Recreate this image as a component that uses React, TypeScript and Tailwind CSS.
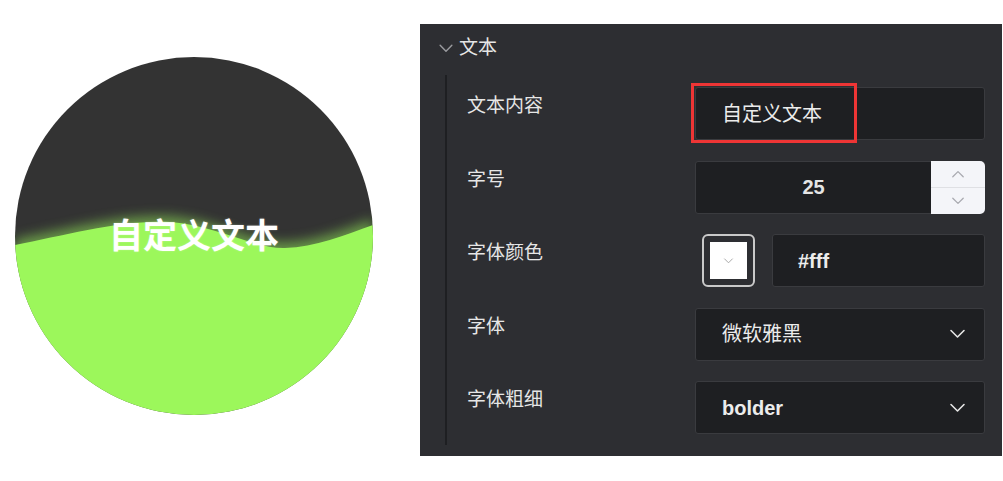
import React from "react";

const CJK = { fontFamily: '"Liberation Sans", "Noto Sans CJK SC", sans-serif' };

function Chevron({ className, up = false }: { className?: string; up?: boolean }) {
  return (
    <svg viewBox="0 0 16 10" className={className} fill="none" stroke="currentColor" strokeWidth="1.6" strokeLinecap="round" strokeLinejoin="round">
      {up ? <path d="M1.5 8.5 L8 2 L14.5 8.5" /> : <path d="M1.5 1.5 L8 8 L14.5 1.5" />}
    </svg>
  );
}

function WaveCircle() {
  const wave =
    "M0,188 C50,178 110,162 155,165 C200,168 240,192 270,191 C300,190 330,178 358,168 L358,358 L0,358 Z";
  return (
    <div className="relative w-[358px] h-[358px]">
      <svg width="358" height="358" viewBox="0 0 358 358" className="absolute inset-0">
        <defs>
          <clipPath id="cc">
            <circle cx="179" cy="179" r="179" />
          </clipPath>
          <filter id="blur" x="-20%" y="-20%" width="140%" height="140%">
            <feGaussianBlur stdDeviation="6" />
          </filter>
        </defs>
        <g clipPath="url(#cc)">
          <rect width="358" height="358" fill="#333333" />
          <path d={wave} fill="#9cf75b" opacity="0.5" filter="url(#blur)" transform="translate(0,-6)" />
          <path d={wave} fill="#9cf75b" />
        </g>
      </svg>
      <div
        className="absolute inset-0 flex items-center justify-center text-white font-bold text-[34px] leading-none [text-shadow:0_0_2px_rgba(255,255,255,0.35)]"
        style={CJK}
      >
        自定义文本
      </div>
    </div>
  );
}

function Row({ label, children }: { label: string; children: React.ReactNode }) {
  return (
    <div className="flex h-[53px]">
      <div className="w-[248px] pl-[20px] pt-[7px] text-[19px] leading-[24px] text-[#e6e6e6]" style={CJK}>
        {label}
      </div>
      <div className="flex-1 flex">{children}</div>
    </div>
  );
}

const boxCls = "h-[53px] bg-[#1e1f22] border border-[#3a3b3f] rounded-[3px] flex items-center text-[20px] text-[#ececec]";

export default function App() {
  return (
    <div className="w-[1003px] h-[481px] bg-white flex" style={CJK}>
      <div className="w-[420px] pl-[15px] pt-[57px]">
        <WaveCircle />
      </div>
      <div className="mt-[24px] w-[582px] h-[432px] bg-[#2d2e32] flex flex-col">
        <div className="h-[48px] flex items-center pl-[18px] gap-[5px] text-[#e6e6e6] text-[19px]">
          <Chevron className="w-[16px] h-[9px] text-[#9a9b9f]" />
          <span>文本</span>
        </div>
        <div className="mt-[3px] ml-[25px] mr-[17px] border-l-2 border-[#1e1f22] pt-[12px] pb-[11px] flex flex-col gap-[20.5px]">
          <Row label="文本内容">
            <div className="relative w-full">
              <div className={boxCls + " w-full pl-[26px]"}>自定义文本</div>
              <div className="absolute left-[-4px] top-[-4px] w-[166px] h-[60px] border-[3px] border-[#ee3535] pointer-events-none" />
            </div>
          </Row>
          <Row label="字号">
            <div className={boxCls + " w-full"}>
              <div className="flex-1 text-center font-bold text-[#e5e5e5]">25</div>
              <div className="w-[54px] h-[53px] -mr-px bg-[#f4f5f9] rounded-r-[5px] flex flex-col">
                <div className="flex-1 flex items-center justify-center border-b border-[#dfe0e4]">
                  <Chevron up className="w-[14px] h-[8px] text-[#a9aab0]" />
                </div>
                <div className="flex-1 flex items-center justify-center">
                  <Chevron className="w-[14px] h-[8px] text-[#a9aab0]" />
                </div>
              </div>
            </div>
          </Row>
          <Row label="字体颜色">
            <div className="flex w-full">
              <div className="ml-[7px] w-[53px] h-[53px] rounded-[6px] border-2 border-[#c9c9c9] p-[6px] bg-[#2d2e32]">
                <div className="w-full h-full bg-white flex items-center justify-center">
                  <Chevron className="w-[11px] h-[6px] text-[#a5a5a5]" />
                </div>
              </div>
              <div className={boxCls + " ml-[17px] flex-1 pl-[25px] font-bold"}>#fff</div>
            </div>
          </Row>
          <Row label="字体">
            <div className={boxCls + " w-full pl-[26px] pr-[18px] justify-between"}>
              <span>微软雅黑</span>
              <Chevron className="w-[17px] h-[10px] text-[#e5e5e5]" />
            </div>
          </Row>
          <Row label="字体粗细">
            <div className={boxCls + " w-full pl-[26px] pr-[18px] justify-between font-bold"}>
              <span>bolder</span>
              <Chevron className="w-[17px] h-[10px] text-[#e5e5e5]" />
            </div>
          </Row>
        </div>
      </div>
    </div>
  );
}
